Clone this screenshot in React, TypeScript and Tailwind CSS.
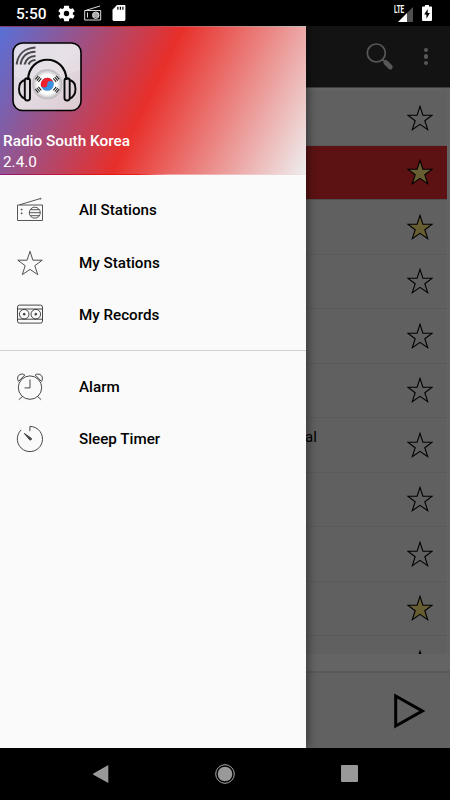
const stations = [
  { name: "", favorite: false },
  { name: "", favorite: true, active: true },
  { name: "", favorite: true },
  { name: "", favorite: false },
  { name: "", favorite: false },
  { name: "", favorite: false },
  { name: "al", favorite: false },
  { name: "", favorite: false },
  { name: "", favorite: false },
  { name: "", favorite: true },
  { name: "", favorite: false },
];

const STAR = "M13 1.3 15.9 10.2H25.2L17.8 15.7 20.7 24.6 13 19.4 5.3 24.6 8.2 15.7.8 10.2h9.3z";

function StarIcon({ filled = false, thin = false }: { filled?: boolean; thin?: boolean }) {
  return (
    <svg
      className="h-[26px] w-[26px] shrink-0"
      viewBox="0 0 26 26"
      fill={filled ? "#ffe87c" : "none"}
      stroke={thin ? "#333" : "#000"}
      strokeWidth={thin ? 0.85 : 1.1}
    >
      <path d={STAR} />
    </svg>
  );
}

function RadioIcon() {
  return (
    <svg className="size-[28px]" viewBox="0 0 28 28" fill="none" stroke="#444" strokeWidth="0.9">
      <path d="M1.5 9h25v15.5h-25zM3.5 8.8 24 2.7" />
      <circle cx="24.5" cy="2.7" r="0.5" />
      <circle cx="18.8" cy="16.7" r="5.5" />
      <path d="M14.3 13.7h9M13.3 16.7h11M14.3 19.7h9" />
      <circle cx="5.7" cy="13.6" r="0.5" fill="#444" />
      <circle cx="5.7" cy="17.3" r="0.5" fill="#444" />
    </svg>
  );
}

function CassetteIcon() {
  return (
    <svg className="size-[28px]" viewBox="0 0 28 28" fill="none" stroke="#333" strokeWidth="0.9">
      <rect x="1.5" y="4.1" width="25" height="18" rx="2" />
      <path d="M1.5 8h25M1.5 18.2h25" />
      <circle cx="8.2" cy="13.2" r="4.8" />
      <circle cx="19.8" cy="13.2" r="4.8" />
      <circle cx="8.2" cy="13.2" r="0.9" fill="#333" />
      <circle cx="19.8" cy="13.2" r="0.9" fill="#333" />
    </svg>
  );
}

function AlarmIcon() {
  return (
    <svg className="size-[28px]" viewBox="0 0 28 28" fill="none" stroke="#333" strokeWidth="0.9">
      <circle cx="14" cy="14.6" r="11.7" />
      <path d="M14 6.5v8.4H8.5M6.4 23.5l-3.6 3.2M21.6 23.5l3.6 3.2" />
      <path d="M2.5 8.4C.8 5.5 1.5 2 5 1.2c1.7-.4 3 .1 3.8.8L2.5 8.4z" />
      <path d="M25.5 8.4c1.7-2.9 1-6.4-2.5-7.2-1.7-.4-3 .1-3.8.8l6.3 6.4z" />
    </svg>
  );
}

function TimerIcon() {
  return (
    <svg className="size-[28px]" viewBox="0 0 28 28" fill="none" stroke="#333" strokeWidth="0.9">
      <path d="M13.9 6.2V1.4a12.6 12.6 0 1 1-8.7 3.5" />
      <path d="M8.3 8.4 15.2 13.2c1 1-.6 2.5-1.6 1.6z" fill="#555" />
    </svg>
  );
}

function AppLogo() {
  return (
    <svg className="h-[71px] w-[71px]" viewBox="0 0 71 71" fill="none">
      <defs>
        <linearGradient id="plate" x1="0" y1="0" x2="1" y2="1">
          <stop stopColor="#dcd8e6" />
          <stop offset="0.5" stopColor="#e3dae2" />
          <stop offset="1" stopColor="#dccbd0" />
        </linearGradient>
        <radialGradient id="ball">
          <stop offset="0.65" stopColor="#fff" />
          <stop offset="1" stopColor="#b5b2b5" />
        </radialGradient>
      </defs>
      <rect x="1" y="1" width="68" height="67.5" rx="9.5" fill="url(#plate)" stroke="#000" strokeWidth="1.6" />
      <path d="M2.5 35C20 40 49 37 68 28V10c0-5-3-7-7-7H10c-5 0-7 3-7 7z" fill="#fff" opacity="0.16" />
      <g stroke="#4a484c" strokeWidth="2">
        <path d="M4.6 22.5C6 12 13 6 23.5 5.6" />
        <path d="M8.5 22.5C10 14 15 10 23.5 9.8" />
        <path d="M12.5 22.5C14 17 17.5 14.2 23.5 14" />
        <path d="M16.5 22.5c1.2-2.8 3.5-4.3 7-4.5" />
      </g>
      <g stroke="#080808">
        <path d="M16 38C17 11 53.5 11 54.5 38" strokeWidth="2.2" />
        <rect x="12.8" y="36.2" width="5.2" height="22.3" rx="2.5" strokeWidth="1.9" />
        <rect x="52.5" y="36.2" width="5.2" height="22.3" rx="2.5" strokeWidth="1.9" />
        <path d="M12.5 38C5.2 40.5 5.2 53.5 12.5 56.5M58 38c7.3 2.5 7.3 15.5 0 18.5" strokeWidth="1.9" />
      </g>
      <circle cx="35.3" cy="42.3" r="15" fill="url(#ball)" />
      <circle cx="35.3" cy="42.3" r="6.5" fill="#3c90dd" />
      <path d="M28.8 42.3a6.5 6.5 0 0 1 13 0 3.25 3.25 0 0 0-6.5 0 3.25 3.25 0 0 1-6.5 0" fill="#f0202c" />
      <g stroke="#222" strokeWidth="1.05">
        <path d="M23.4 37.4l2.9-3.5M24.9 38.6l2.9-3.5M26.4 39.8l2.9-3.5" />
        <path d="M47.2 37.4l-2.9-3.5M45.7 38.6l-2.9-3.5M44.2 39.8l-2.9-3.5" />
        <path d="M23.4 47.2l2.9 3.5M24.9 46l2.9 3.5M26.4 44.8l2.9 3.5" />
        <path d="M47.2 47.2l-2.9 3.5M45.7 46l-2.9 3.5M44.2 44.8l-2.9 3.5" />
      </g>
    </svg>
  );
}

function StatusBar() {
  return (
    <header className="flex h-[26px] shrink-0 items-center bg-black pl-4 pr-[18px] text-white">
      <span className="w-[42px] pt-[3px] text-[15.5px] font-medium leading-none">5:50</span>
      <svg className="size-[17px]" viewBox="2 2 20 20" fill="#fff">
        <path d="M19.4 13a7.5 7.5 0 0 0 0-2l2.2-1.7-2.1-3.6-2.6 1a7 7 0 0 0-1.7-1L14.8 3h-5.6l-.4 2.7a7 7 0 0 0-1.7 1l-2.6-1-2.1 3.6L4.6 11a7.5 7.5 0 0 0 0 2l-2.2 1.7 2.1 3.6 2.6-1a7 7 0 0 0 1.7 1l.4 2.7h5.6l.4-2.7a7 7 0 0 0 1.7-1l2.6 1 2.1-3.6zM12 15.2a3.2 3.2 0 1 1 0-6.4 3.2 3.2 0 0 1 0 6.4" />
      </svg>
      <svg className="ml-[9px] h-[16px] w-[18px]" viewBox="0 0 18 16" fill="none" stroke="#ddd" strokeWidth="1">
        <path d="M.7 5.5h16v9.5H.7zM2 5.3 16 1M3.5 7.5v5" />
        <circle cx="11.8" cy="10.2" r="3.2" fill="#777" />
        <path d="M8.5 9h6.5M8.5 11h6.5" />
      </svg>
      <svg className="ml-[10px] h-4 w-[14px]" viewBox="0 0 14 16" fill="#fff">
        <path d="M5 0h7.2c.7 0 1.2.5 1.2 1.2v13.4c0 .8-.5 1.3-1.2 1.3H1.8c-.8 0-1.3-.5-1.3-1.3V4.8z" />
        <path d="M5.9 1.8v3M8.4 1.8v3M10.9 1.8v3" stroke="#000" strokeWidth="1.2" />
      </svg>
      <div className="ml-auto flex items-center">
        <span className="h-[17px] w-[10px] origin-left scale-x-[0.63] text-[10px] font-bold leading-[10px]">LTE</span>
        <svg className="-ml-[6px] mt-0.5 h-[15px] w-[15px]" viewBox="0 0 15 15">
          <path d="M9 6 15 0v15H9z" fill="#505050" />
          <path d="M0 15 9 6v9z" fill="#fff" />
        </svg>
        <svg className="ml-[9px] h-[16px] w-[10px]" viewBox="0 0 10 17" preserveAspectRatio="none">
          <path d="M3 0h4v1.5h2c.6 0 1 .4 1 1V16c0 .6-.4 1-1 1H1c-.6 0-1-.4-1-1V2.5c0-.6.4-1 1-1h2z" fill="#fff" />
          <path d="M5.7 4.2 2.2 10h2.2v4.5L7.9 8.4H5.7z" fill="#000" />
        </svg>
      </div>
    </header>
  );
}

function StationScreen() {
  return (
    <div className="flex h-full flex-col bg-[#fafafa]">
      <div className="flex h-[61px] shrink-0 items-center justify-end bg-[#303030]">
        <svg className="mr-[30px] h-[28px] w-[28px]" viewBox="0 0 28 28" fill="none" stroke="#dcdcdc">
          <circle cx="10.3" cy="10" r="9" strokeWidth="1.7" />
          <path d="m16.6 16.3 3 3" strokeWidth="1.8" />
          <path d="m19.8 19.5 4.5 4.5" strokeWidth="4.8" strokeLinecap="round" />
        </svg>
        <div className="mr-[22px] flex flex-col gap-[2px]">
          <span className="size-[4.5px] rounded-full bg-[#dcdcdc]" />
          <span className="size-[4.5px] rounded-full bg-[#dcdcdc]" />
          <span className="size-[4.5px] rounded-full bg-[#dcdcdc]" />
        </div>
      </div>
      <div className="h-[567px] shrink-0 overflow-hidden border-t border-[#999] bg-[#f7f7f7] pt-[3px]">
        <ul className="mr-[3.5px]">
          {stations.map((station, i) => (
            <li
              key={i}
              className={`flex h-[54.5px] items-center justify-between border-b pl-[305px] pr-[13.5px] ${
                station.active ? "border-[#c9c9c9] bg-[#e62d2d]" : "border-[#e0e0e0] bg-[#f1f1f1]"
              }`}
            >
              <span className="-mt-4 text-[15px] leading-5 text-black">{station.name}</span>
              <StarIcon filled={station.favorite} />
            </li>
          ))}
        </ul>
      </div>
      <div className="mt-[17px] flex flex-1 items-center justify-end border-t-2 border-[#dedede] bg-[#f2f2f2] pr-[25px]">
        <svg className="h-[36px] w-[32px]" viewBox="0 0 32 36" fill="none" stroke="#000" strokeWidth="3">
          <path d="M2.7 3v30L29.2 18z" />
        </svg>
      </div>
    </div>
  );
}

const menuGroups = [
  [
    { label: "All Stations", icon: <RadioIcon /> },
    { label: "My Stations", icon: <StarIcon thin /> },
    { label: "My Records", icon: <CassetteIcon /> },
  ],
  [
    { label: "Alarm", icon: <AlarmIcon /> },
    { label: "Sleep Timer", icon: <TimerIcon /> },
  ],
];

function Drawer() {
  return (
    <aside className="absolute inset-y-0 left-0 flex w-[306px] flex-col bg-[#fafafa] shadow-[2px_0_9px_rgba(0,0,0,0.45)]">
      <div className="flex h-[148px] shrink-0 flex-col border-t border-black/20 bg-[linear-gradient(116deg,#5870d8,#e82f2a_48.5%,#eeeeee)] pt-[15px] text-white">
        <div className="ml-3">
          <AppLogo />
        </div>
        <div className="ml-[3px] mt-[18px] text-[15.35px] font-medium leading-[21px]">Radio South Korea</div>
        <div className="ml-[3px] text-[15.35px] leading-[21px]">2.4.0</div>
      </div>
      <div className="h-px shrink-0 bg-[linear-gradient(90deg,#8c1a7a,#e31414_32%,#f01c1c_45%,#f0a0a0_55%,#f0e4e4)]" />
      <nav className="pt-[9px]">
        {menuGroups.map((group, i) => (
          <ul key={i} className={i > 0 ? "mt-[8.5px] border-t border-[#d2d2d2] pt-[9.5px]" : ""}>
            {group.map((item) => (
              <li key={item.label} className="flex h-[52.5px] items-center">
                <span className="ml-4 flex w-[28px] justify-center">{item.icon}</span>
                <span className="ml-[35px] pt-px text-[15.2px] font-medium text-black">{item.label}</span>
              </li>
            ))}
          </ul>
        ))}
      </nav>
    </aside>
  );
}

function NavigationBar() {
  return (
    <footer className="flex h-[52px] shrink-0 items-center justify-between bg-black px-[92.5px] pb-px">
      <svg className="h-[18px] w-4" viewBox="0 0 16 18" fill="#999">
        <path d="M15.3 0v18L.4 9.7c-.5-.3-.5-1 0-1.3z" />
      </svg>
      <svg className="h-5 w-5" viewBox="0 0 20 20">
        <circle cx="10" cy="10" r="9.3" fill="none" stroke="#aaa" />
        <circle cx="10" cy="10" r="7.3" fill="#999" />
      </svg>
      <span className="h-[17px] w-[17px] rounded-[1px] bg-[#999]" />
    </footer>
  );
}

export default function App() {
  return (
    <div className="flex h-[800px] w-[450px] flex-col overflow-hidden bg-black font-[Roboto,sans-serif]">
      <StatusBar />
      <main className="relative h-[722px] shrink-0 overflow-hidden">
        <StationScreen />
        <div className="absolute inset-0 bg-black/60" />
        <Drawer />
      </main>
      <NavigationBar />
    </div>
  );
}
